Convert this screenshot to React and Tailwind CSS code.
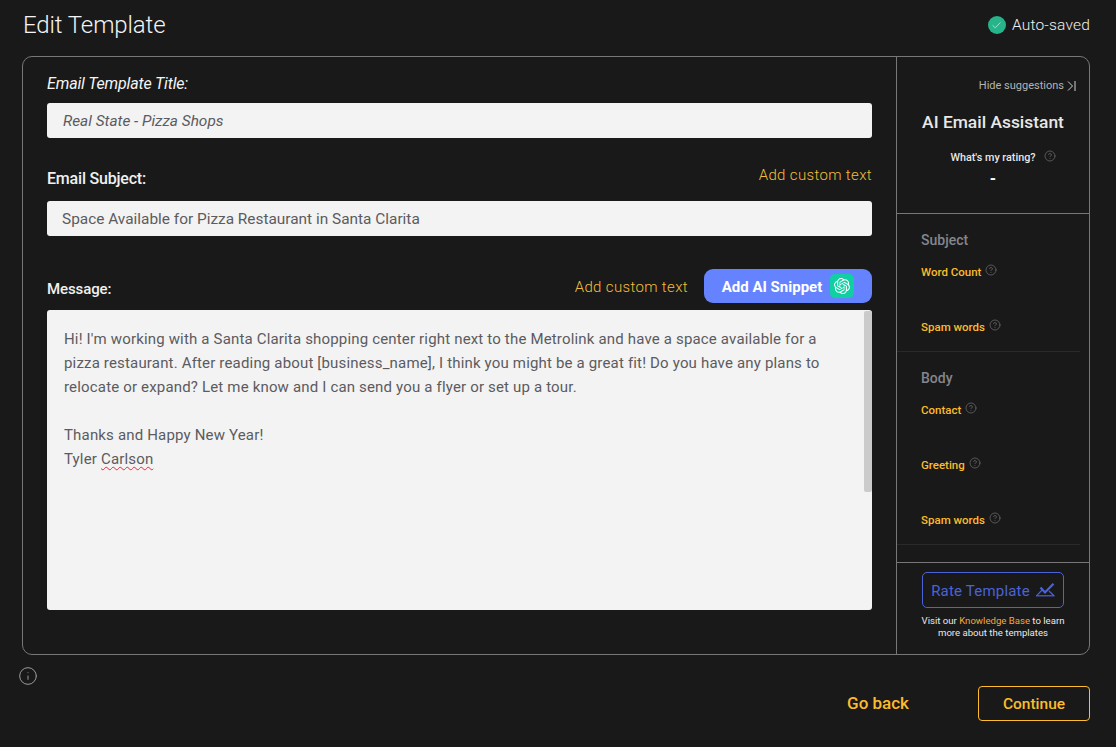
import { Info, CircleHelp, Check } from 'lucide-react';
import { SiOpenai } from 'react-icons/si';

const font = 'font-["Roboto",sans-serif]';

function Help({ className = '' }) {
  return <CircleHelp size={12} strokeWidth={1.3} className={`shrink-0 text-[#77777a] ${className}`} />;
}

function Metric({ label, className = '' }) {
  return (
    <div className={`flex items-start gap-1 pl-6 text-[11.5px] leading-[14px] font-medium text-[#fcbc2c] ${className}`}>
      <span>{label}</span>
      <Help className="-mt-[1px]" />
    </div>
  );
}

function RateIcon() {
  return (
    <svg width="19" height="14" viewBox="0 0 19 14" fill="none" stroke="currentColor" strokeWidth="1.2">
      <path d="M0 12.8h18.5" />
      <path d="M0.5 12.8 7 6" />
      <path d="M18 12.8 13 8" />
      <path d="M4.5 4.5l4.5 5L17.5 .8" strokeWidth="2.2" />
    </svg>
  );
}

export default function App() {
  return (
    <div className={`${font} h-[747px] w-[1116px] overflow-hidden bg-[#191919] pr-[26px] pl-[22px] text-white`}>
      <header className="flex h-[56px] items-start justify-between">
        <h1 className="mt-[10px] ml-[1px] text-[24px] leading-[30px] font-light tracking-[-0.1px] text-[#f4f4f4]">Edit Template</h1>
        <div className="mt-[15px] flex items-center gap-[6px]">
          <span className="flex h-[18px] w-[18px] items-center justify-center rounded-full bg-[#26b48a]">
            <Check size={11} strokeWidth={1.5} className="text-[#d8f3ea]" />
          </span>
          <span className="text-[15.5px] leading-[20px] font-light tracking-[0.2px] text-[#f0f0f0]">Auto-saved</span>
        </div>
      </header>

      <div className="flex h-[599px] rounded-[10px] border border-[#77777a]">
        <main className="w-[873px] shrink-0 px-[24px] pt-[17px]">
          <label className="block text-[16px] leading-[20px] italic tracking-[-0.15px] text-[#f5f5f5]">Email Template Title:</label>
          <div className="mt-[9px] flex h-[35px] items-center rounded-[3px] bg-[#f3f3f3] px-[16px] pt-[3px] text-[15.4px] italic text-[#5b5b60]">
            Real State - Pizza Shops
          </div>

          <div className="mt-[25px] flex h-[33px] items-center justify-between">
            <label className="-mt-[2px] text-[16px] leading-[20px] font-medium tracking-[-0.2px] text-[#f0f0f0]">Email Subject:</label>
            <button className="-mt-[8px] text-[15px] font-light tracking-[0.35px] text-[#f2bf3b]">Add custom text</button>
          </div>
          <div className="mt-[5px] flex h-[35px] items-center rounded-[3px] bg-[#f3f3f3] px-[15px] pt-[3px] text-[15.4px] text-[#5b5b60]">
            Space Available for Pizza Restaurant in Santa Clarita
          </div>

          <div className="mt-[33px] flex h-[34px] items-center justify-between">
            <label className="mt-[6px] text-[15px] leading-[20px] font-medium tracking-[-0.1px] text-[#f0f0f0]">Message:</label>
            <div className="flex items-center gap-[16px]">
              <button className="mt-[2px] text-[15px] font-light tracking-[0.35px] text-[#f2bf3b]">Add custom text</button>
              <button className="flex h-[34px] w-[168px] items-center justify-center gap-[8px] rounded-[9px] bg-[#6583fe] text-[15px] font-bold text-white">
                <span className="mt-[2px]">Add AI Snippet</span>
                <span className="flex h-[24px] w-[24px] items-center justify-center rounded-[5px] bg-[#10cfa3]">
                  <SiOpenai size={16} className="text-white" />
                </span>
              </button>
            </div>
          </div>

          <div className="relative mt-[7px] h-[300px] rounded-[3px] bg-[#f3f3f3] px-[17px] pt-[17px] text-[15px] leading-[24px] tracking-[0.17px] text-[#5b5b60]">
            <p>Hi! I'm working with a Santa Clarita shopping center right next to the Metrolink and have a space available for a</p>
            <p>pizza restaurant. After reading about [business_name], I think you might be a great fit! Do you have any plans to</p>
            <p>relocate or expand? Let me know and I can send you a flyer or set up a tour.</p>
            <p className="h-[24px]"></p>
            <p>Thanks and Happy New Year!</p>
            <p>
              Tyler <span className="underline decoration-[#f0263c] decoration-wavy decoration-1 underline-offset-2">Carlson</span>
            </p>
            <div className="absolute top-[1px] right-0 h-[181px] w-[8px] rounded-[2px] bg-[#cbcbcb]"></div>
          </div>
        </main>

        <aside className="flex min-w-0 flex-1 flex-col border-l border-[#77777a]">
          <div className="h-[157px] shrink-0 border-b border-[#77777a]">
            <div className="flex items-center justify-end gap-[3px] pt-[22px] pr-[13px] text-[11px] leading-[14px] text-[#b4b4b4]">
              Hide suggestions
              <svg width="9" height="10" viewBox="0 0 9 10" fill="none" stroke="#cfcfcf" strokeWidth="1">
                <path d="M1 .5 5.5 5 1 9.5" />
                <path d="M8 0v10" />
              </svg>
            </div>
            <h2 className="mt-[17px] text-center text-[17.4px] leading-[24px] font-medium text-[#e8e8e8]">AI Email Assistant</h2>
            <div className="mt-[17px] flex items-start justify-center gap-[8px] pl-[20px]">
              <span className="text-[10.8px] leading-[14px] font-medium text-[#e8e8e8]">What's my rating?</span>
              <Help className="-mt-[1px]" />
            </div>
            <div className="mt-[5px] text-center text-[16px] leading-[18px] font-bold text-white">-</div>
          </div>

          <div className="min-h-0 flex-1 overflow-hidden">
            <div className="mr-[9px] h-[138px] border-b border-[#2a2a2a]">
              <h3 className="pt-[16px] pl-6 text-[14px] leading-[20px] font-medium text-[#83868d]">Subject</h3>
              <Metric label="Word Count" className="mt-[15px]" />
              <Metric label="Spam words" className="mt-[41px]" />
            </div>
            <div className="mr-[9px] h-[193px] border-b border-[#2a2a2a]">
              <h3 className="pt-[16px] pl-6 text-[14px] leading-[20px] font-medium text-[#83868d]">Body</h3>
              <Metric label="Contact" className="mt-[15px]" />
              <Metric label="Greeting" className="mt-[41px]" />
              <Metric label="Spam words" className="mt-[41px]" />
            </div>
          </div>

          <div className="flex h-[92px] shrink-0 flex-col items-center border-t border-[#77777a] pt-[9px]">
            <button className="flex h-[36px] w-[142px] items-center justify-center gap-[6px] rounded-[5px] border border-[#4a63d6] text-[15px] tracking-[0.2px] text-[#4a63d6]">
              <span className="mt-[2px]">Rate Template</span>
              <RateIcon />
            </button>
            <p className="mt-[7px] text-center text-[9.6px] leading-[12px] text-[#e8e8e8]">
              Visit our <span className="text-[#f2a93b]">Knowledge Base</span> to learn
              <br />
              more about the templates
            </p>
          </div>
        </aside>
      </div>

      <div className="mt-[11px] -ml-[4px]">
        <Info size={20} strokeWidth={1.2} className="text-[#9a9a9a]" />
      </div>

      <div className="flex items-center justify-end">
        <button className="mr-[69px] text-[17px] font-medium text-[#fcbc2c]">Go back</button>
        <button className="h-[35px] w-[112px] rounded-[4px] border border-[#fcbc2c] pt-[3px] text-[15.5px] font-medium text-[#fcbc2c]">Continue</button>
      </div>
    </div>
  );
}
